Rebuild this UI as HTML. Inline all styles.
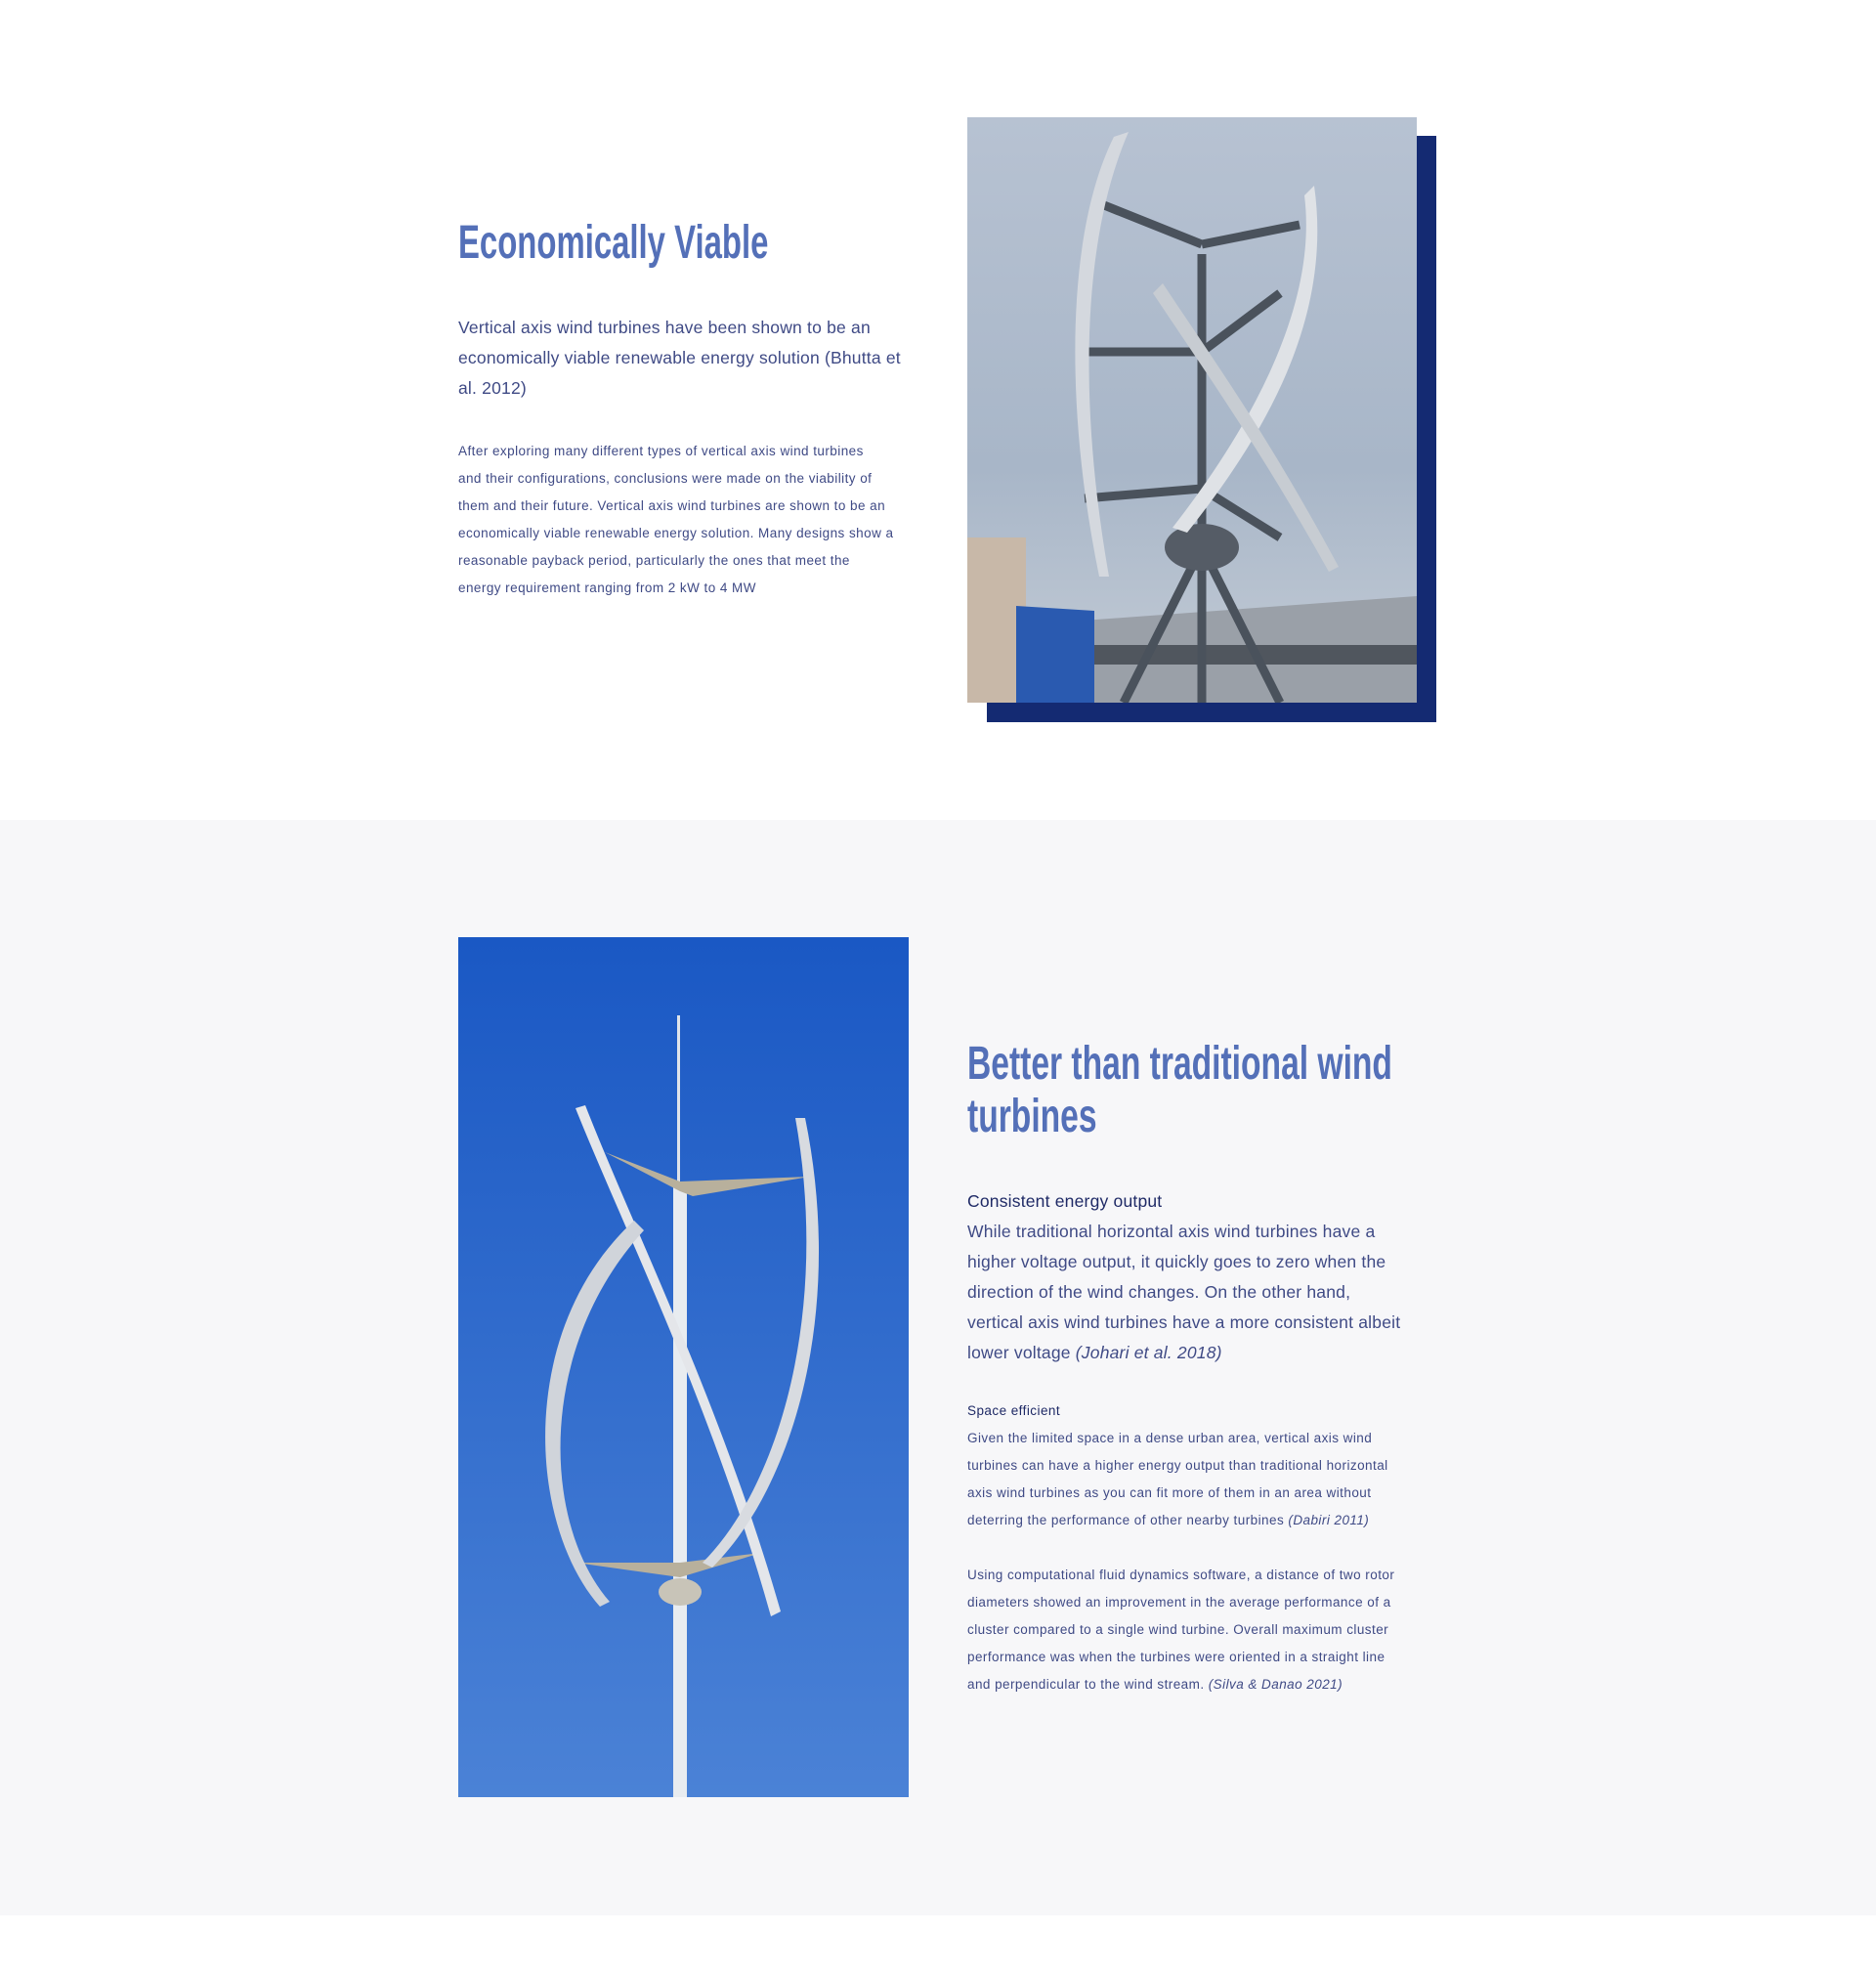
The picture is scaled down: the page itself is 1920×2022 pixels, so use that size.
<!DOCTYPE html>
<html><head><meta charset="utf-8">
<style>
*{margin:0;padding:0;box-sizing:border-box}
html,body{width:1920px;height:2022px;background:#fff;overflow:hidden}
body{position:relative;font-family:"Liberation Sans",sans-serif;color:#3b4680}
.abs{position:absolute}
h2{position:absolute;font-family:"Liberation Sans Narrow","Liberation Sans",sans-serif;font-weight:bold;color:#5470b8;font-size:48px;line-height:54px;transform:scaleX(0.70);transform-origin:left top;white-space:nowrap}
.p1{font-size:17.5px;line-height:31px;color:#3f4a85;white-space:nowrap;letter-spacing:0.2px}
.p2{font-size:13.5px;line-height:28px;color:#3f4a85;white-space:nowrap;letter-spacing:0.45px}
.b{color:#1f2a66;font-weight:normal}
i{font-style:italic}
</style></head><body>
<div class="abs" style="left:0;top:839px;width:1920px;height:1121px;background:#f7f7f9"></div>

<h2 style="left:469px;top:222px;transform:scaleX(0.685)">Economically Viable</h2>
<div class="abs p1" style="left:469px;top:320px">Vertical axis wind turbines have been shown to be an<br>economically viable renewable energy solution (Bhutta et<br>al. 2012)</div>
<div class="abs p2" style="left:469px;top:448px">After exploring many different types of vertical axis wind turbines<br>and their configurations, conclusions were made on the viability of<br>them and their future. Vertical axis wind turbines are shown to be an<br>economically viable renewable energy solution. Many designs show a<br>reasonable payback period, particularly the ones that meet the<br>energy requirement ranging from 2 kW to 4 MW</div>

<div class="abs" style="left:1010px;top:139px;width:460px;height:600px;background:#142a72"></div>
<svg class="abs" style="left:990px;top:120px" width="460" height="599" viewBox="0 0 460 599">
<defs><linearGradient id="s1" x1="0" y1="0" x2="0" y2="1"><stop offset="0" stop-color="#b7c2d2"/><stop offset="0.6" stop-color="#a8b6c8"/><stop offset="1" stop-color="#c4ccd6"/></linearGradient></defs>
<rect width="460" height="599" fill="url(#s1)"/>
<rect x="0" y="430" width="60" height="169" fill="#c8b8a8"/>
<polygon points="50,520 460,490 460,599 50,599" fill="#9aa0a8"/>
<rect x="80" y="540" width="380" height="20" fill="#50565e"/>
<polygon points="50,500 130,505 130,599 50,599" fill="#2a5ab0"/>
<g stroke="#4a525c" stroke-width="9" fill="none">
<line x1="240" y1="440" x2="160" y2="599"/><line x1="240" y1="440" x2="320" y2="599"/><line x1="240" y1="440" x2="240" y2="599"/>
<line x1="240" y1="140" x2="240" y2="440"/>
<line x1="240" y1="130" x2="140" y2="90"/><line x1="240" y1="130" x2="340" y2="110"/>
<line x1="240" y1="240" x2="120" y2="240"/><line x1="240" y1="240" x2="320" y2="180"/>
<line x1="240" y1="380" x2="120" y2="390"/><line x1="240" y1="380" x2="320" y2="430"/>
</g>
<ellipse cx="240" cy="440" rx="38" ry="24" fill="#555c66"/>
<path d="M150,20 C100,120 100,300 135,470 L145,470 C115,300 115,130 165,15 Z" fill="#d4d8de"/>
<path d="M345,80 C360,200 280,330 210,420 L225,425 C300,330 375,210 355,70 Z" fill="#dfe2e6"/>
<path d="M200,170 C260,260 310,330 380,460 L370,465 C300,340 250,270 190,180 Z" fill="#c7ccd2"/>
</svg>

<svg class="abs" style="left:469px;top:959px" width="461" height="880" viewBox="0 0 461 880">
<defs><linearGradient id="s2" x1="0" y1="0" x2="0" y2="1"><stop offset="0" stop-color="#1a58c4"/><stop offset="1" stop-color="#4b82d6"/></linearGradient></defs>
<rect width="461" height="880" fill="url(#s2)"/>
<rect x="224" y="80" width="3" height="200" fill="#e0e4ea"/>
<rect x="220" y="250" width="14" height="630" fill="#e8ecf0"/>
<ellipse cx="227" cy="670" rx="22" ry="14" fill="#c8c4b8"/>
<path d="M227,260 L150,220 L227,250 L360,245 L240,265 Z" fill="#b8b09c"/>
<path d="M227,640 L120,640 L227,655 L310,630 Z" fill="#b8b09c"/>
<path d="M120,175 C170,300 260,480 320,695 L330,690 C270,480 180,300 130,172 Z" fill="#e4e6ea"/>
<path d="M345,185 C380,380 330,560 250,640 L260,645 C345,560 395,380 355,185 Z" fill="#d8dbe0"/>
<path d="M180,290 C60,400 70,600 145,685 L155,680 C85,600 80,420 190,300 Z" fill="#d0d4da"/>
</svg>

<h2 style="left:990px;top:1062px">Better than traditional wind<br>turbines</h2>
<div class="abs" style="left:990px;top:1214px">
<div class="p1 b">Consistent energy output</div>
<div class="p1">While traditional horizontal axis wind turbines have a<br>higher voltage output, it quickly goes to zero when the<br>direction of the wind changes. On the other hand,<br>vertical axis wind turbines have a more consistent albeit<br>lower voltage <i>(Johari et al. 2018)</i></div>
</div>
<div class="abs" style="left:990px;top:1430px">
<div class="p2 b">Space efficient</div>
<div class="p2">Given the limited space in a dense urban area, vertical axis wind<br>turbines can have a higher energy output than traditional horizontal<br>axis wind turbines as you can fit more of them in an area without<br>deterring the performance of other nearby turbines <i>(Dabiri 2011)</i></div>
<div class="p2" style="margin-top:28px">Using computational fluid dynamics software, a distance of two rotor<br>diameters showed an improvement in the average performance of a<br>cluster compared to a single wind turbine. Overall maximum cluster<br>performance was when the turbines were oriented in a straight line<br>and perpendicular to the wind stream. <i>(Silva &amp; Danao 2021)</i></div>
</div>
</body></html>
